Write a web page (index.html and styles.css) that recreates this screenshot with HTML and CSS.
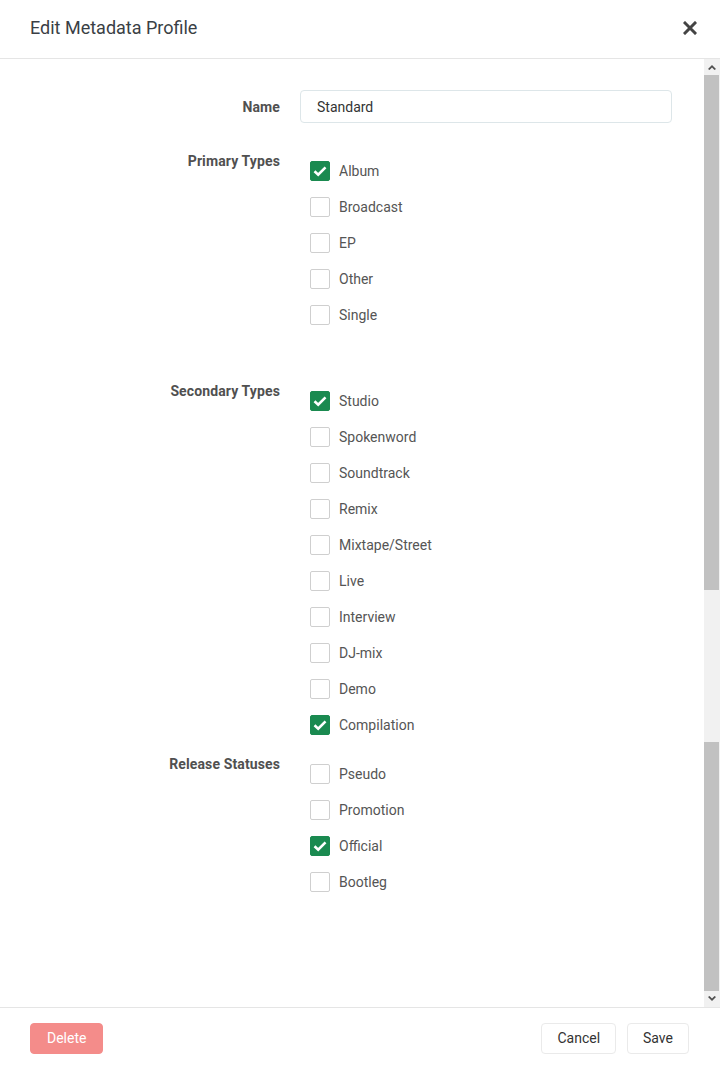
FILE: index.html
```html
<!DOCTYPE html>
<html lang="en">
<head>
<meta charset="utf-8">
<title>Edit Metadata Profile</title>
<link rel="stylesheet" href="styles.css">
</head>
<body>
<div class="modal">
  <header class="modal-header">
    <h1 class="modal-title">Edit Metadata Profile</h1>
    <button class="close" aria-label="Close">
      <svg width="14" height="14" viewBox="0 0 14 14"><path d="M2 2 L12 12 M12 2 L2 12" stroke="#444" stroke-width="3" stroke-linecap="square"/></svg>
    </button>
  </header>
  <div class="modal-body">
    <div class="scroll-content">
      <div class="form-group group-name">
        <label class="group-label">Name</label>
        <div class="group-field">
          <input class="text-input" type="text" value="Standard">
        </div>
      </div>

      <div class="form-group group-spaced">
        <label class="group-label">Primary Types</label>
        <div class="group-field check-list">
          <div class="check-item"><span class="box checked"><svg width="14" height="12" viewBox="0 0 14 12"><path d="M1.5 6.2 L5.2 9.6 L12.5 2.3" fill="none" stroke="#fff" stroke-width="2.6"/></svg></span><span class="check-text">Album</span></div>
          <div class="check-item"><span class="box"></span><span class="check-text">Broadcast</span></div>
          <div class="check-item"><span class="box"></span><span class="check-text">EP</span></div>
          <div class="check-item"><span class="box"></span><span class="check-text">Other</span></div>
          <div class="check-item"><span class="box"></span><span class="check-text">Single</span></div>
        </div>
      </div>

      <div class="form-group">
        <label class="group-label">Secondary Types</label>
        <div class="group-field check-list">
          <div class="check-item"><span class="box checked"><svg width="14" height="12" viewBox="0 0 14 12"><path d="M1.5 6.2 L5.2 9.6 L12.5 2.3" fill="none" stroke="#fff" stroke-width="2.6"/></svg></span><span class="check-text">Studio</span></div>
          <div class="check-item"><span class="box"></span><span class="check-text">Spokenword</span></div>
          <div class="check-item"><span class="box"></span><span class="check-text">Soundtrack</span></div>
          <div class="check-item"><span class="box"></span><span class="check-text">Remix</span></div>
          <div class="check-item"><span class="box"></span><span class="check-text">Mixtape/Street</span></div>
          <div class="check-item"><span class="box"></span><span class="check-text">Live</span></div>
          <div class="check-item"><span class="box"></span><span class="check-text">Interview</span></div>
          <div class="check-item"><span class="box"></span><span class="check-text">DJ-mix</span></div>
          <div class="check-item"><span class="box"></span><span class="check-text">Demo</span></div>
          <div class="check-item"><span class="box checked"><svg width="14" height="12" viewBox="0 0 14 12"><path d="M1.5 6.2 L5.2 9.6 L12.5 2.3" fill="none" stroke="#fff" stroke-width="2.6"/></svg></span><span class="check-text">Compilation</span></div>
        </div>
      </div>

      <div class="form-group">
        <label class="group-label">Release Statuses</label>
        <div class="group-field check-list">
          <div class="check-item"><span class="box"></span><span class="check-text">Pseudo</span></div>
          <div class="check-item"><span class="box"></span><span class="check-text">Promotion</span></div>
          <div class="check-item"><span class="box checked"><svg width="14" height="12" viewBox="0 0 14 12"><path d="M1.5 6.2 L5.2 9.6 L12.5 2.3" fill="none" stroke="#fff" stroke-width="2.6"/></svg></span><span class="check-text">Official</span></div>
          <div class="check-item"><span class="box"></span><span class="check-text">Bootleg</span></div>
        </div>
      </div>
    </div>
    <div class="scrollbar">
      <div class="sb-arrow"><svg width="8" height="6" viewBox="0 0 8 6"><path d="M0 5 L4 1 L8 5 L6.5 6 L4 3.5 L1.5 6 Z" fill="#505050"/></svg></div>
      <div class="sb-thumb sb-thumb-top"></div>
      <div class="sb-track"></div>
      <div class="sb-thumb sb-thumb-bottom"></div>
      <div class="sb-arrow"><svg width="8" height="6" viewBox="0 0 8 6"><path d="M0 1 L4 5 L8 1 L6.5 0 L4 2.5 L1.5 0 Z" fill="#505050"/></svg></div>
    </div>
  </div>
  <footer class="modal-footer">
    <button class="btn btn-danger">Delete</button>
    <div class="footer-right">
      <button class="btn">Cancel</button>
      <button class="btn">Save</button>
    </div>
  </footer>
</div>
</body>
</html>
```

FILE: styles.css
```css
* { box-sizing: border-box; }

html, body {
  margin: 0;
  padding: 0;
  background: #fff;
}

body {
  font-family: Roboto, "Open Sans", "Liberation Sans", sans-serif;
  font-size: 14px;
  color: #515253;
}

.modal {
  display: flex;
  flex-direction: column;
  width: 720px;
  height: 1075px;
  background: #fff;
}

.modal-header {
  display: flex;
  align-items: center;
  justify-content: space-between;
  height: 59px;
  padding: 0 23px 0 30px;
  border-bottom: 1px solid #e5e5e5;
  flex-shrink: 0;
}

.modal-title {
  margin: 0;
  font-size: 18px;
  font-weight: 400;
  color: #3a3f45;
  line-height: 24px;
  padding-bottom: 2px;
}

.close {
  border: 0;
  background: transparent;
  padding: 0;
  width: 14px;
  height: 14px;
  display: flex;
  align-items: center;
  justify-content: center;
  margin-bottom: 2px;
}

.modal-body {
  flex: 1;
  display: flex;
  min-height: 0;
}

.scroll-content {
  flex: 1;
  padding: 31px 32px 0 30px;
}

.form-group {
  display: flex;
  margin-bottom: 4px;
}

.group-name { margin-bottom: 21px; }
.group-spaced { margin-bottom: 41px; }

.group-label {
  width: 250px;
  flex-shrink: 0;
  text-align: right;
  font-weight: 700;
  font-size: 14px;
  line-height: 21px;
  padding-top: 7px;
  color: #505050;
  letter-spacing: 0.12px;
}

.group-field {
  flex: 1;
  margin-left: 20px;
}

.text-input {
  display: block;
  width: 100%;
  height: 33px;
  border: 1px solid #dde6e9;
  border-radius: 4px;
  padding: 0 16px;
  font-family: inherit;
  font-size: 14px;
  color: #333;
  background: #fff;
  outline: none;
}

.check-list {
  padding-top: 9px;
  padding-left: 10px;
}

.check-item {
  display: flex;
  align-items: center;
  height: 36px;
}

.box {
  width: 20px;
  height: 20px;
  border: 1px solid #cfcfcf;
  border-radius: 2px;
  background: #fff;
  display: flex;
  align-items: center;
  justify-content: center;
  flex-shrink: 0;
}

.box.checked {
  background: #1a8a50;
  border-color: #1a8a50;
}

.check-text {
  margin-left: 9px;
  font-size: 14px;
  color: #555;
  line-height: 20px;
}

.scrollbar {
  width: 16px;
  flex-shrink: 0;
  display: flex;
  flex-direction: column;
  background: #f1f1f1;
}

.sb-arrow {
  height: 16px;
  display: flex;
  align-items: center;
  justify-content: center;
  flex-shrink: 0;
}

.sb-thumb {
  background: #c1c1c1;
  margin: 0 1px 0 0;
}

.sb-thumb-top { height: 515px; }
.sb-track { height: 152px; }
.sb-thumb-bottom { flex: 1; }

.modal-footer {
  display: flex;
  align-items: flex-start;
  justify-content: space-between;
  height: 68px;
  padding: 15px 31px 0 30px;
  border-top: 1px solid #e5e5e5;
  flex-shrink: 0;
}

.footer-right {
  display: flex;
  gap: 11px;
}

.btn {
  height: 31px;
  padding: 0 15px;
  border: 1px solid #eaeaea;
  border-radius: 4px;
  background: #fff;
  font-family: inherit;
  font-size: 14px;
  color: #333;
  line-height: 29px;
}

.btn-danger {
  padding: 0 16px;
  background: #f48c8a;
  border-color: #f48c8a;
  color: #fff;
}
```
